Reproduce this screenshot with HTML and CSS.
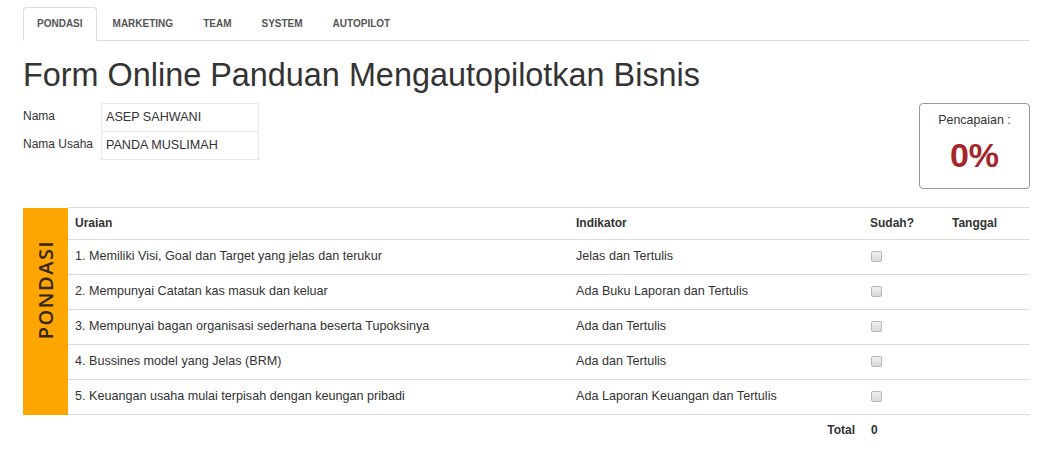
FILE: index.html
```html
<!DOCTYPE html>
<html lang="id">
<head>
<meta charset="utf-8">
<title>Form Online Panduan Mengautopilotkan Bisnis</title>
<link rel="stylesheet" href="styles.css">
</head>
<body>
<div class="page">
  <ul class="tabs">
    <li class="tab active"><a>PONDASI</a></li>
    <li class="tab"><a>MARKETING</a></li>
    <li class="tab"><a>TEAM</a></li>
    <li class="tab"><a>SYSTEM</a></li>
    <li class="tab"><a>AUTOPILOT</a></li>
  </ul>

  <h1 class="title">Form Online Panduan Mengautopilotkan Bisnis</h1>

  <div class="info-row">
    <table class="identity">
      <tr><td class="lbl">Nama</td><td class="val">ASEP SAHWANI</td></tr>
      <tr><td class="lbl">Nama Usaha</td><td class="val">PANDA MUSLIMAH</td></tr>
    </table>
    <div class="score">
      <div class="score-label">Pencapaian :</div>
      <div class="score-value">0%</div>
    </div>
  </div>

  <table class="checklist">
    <colgroup>
      <col class="c-side"><col class="c-uraian"><col class="c-indikator"><col class="c-sudah"><col class="c-tanggal">
    </colgroup>
    <tr class="head">
      <td class="side" rowspan="6"><span class="side-text">PONDASI</span></td>
      <th>Uraian</th><th>Indikator</th><th>Sudah?</th><th>Tanggal</th>
    </tr>
    <tr><td>1. Memiliki Visi, Goal dan Target yang jelas dan terukur</td><td>Jelas dan Tertulis</td><td><span class="check"></span></td><td></td></tr>
    <tr><td>2. Mempunyai Catatan kas masuk dan keluar</td><td>Ada Buku Laporan dan Tertulis</td><td><span class="check"></span></td><td></td></tr>
    <tr><td>3. Mempunyai bagan organisasi sederhana beserta Tupoksinya</td><td>Ada dan Tertulis</td><td><span class="check"></span></td><td></td></tr>
    <tr><td>4. Bussines model yang Jelas (BRM)</td><td>Ada dan Tertulis</td><td><span class="check"></span></td><td></td></tr>
    <tr><td>5. Keuangan usaha mulai terpisah dengan keungan pribadi</td><td>Ada Laporan Keuangan dan Tertulis</td><td><span class="check"></span></td><td></td></tr>
    <tr class="total"><td></td><td></td><td class="total-lbl">Total</td><td class="total-val">0</td><td></td></tr>
  </table>
</div>
</body>
</html>
```

FILE: styles.css
```css
html, body {
  margin: 0;
  padding: 0;
  background: #fff;
}
body {
  font-family: "Liberation Sans", Arial, sans-serif;
  font-size: 12px;
  color: #333;
}
.page {
  padding: 7px 10px 0 23px;
}

/* tabs */
.tabs {
  list-style: none;
  margin: 0;
  padding: 0;
  display: flex;
  border-bottom: 1px solid #ddd;
}
.tab {
  margin-right: 2px;
  margin-bottom: -1px;
}
.tab a {
  display: block;
  padding: 10px 13px;
  line-height: 12px;
  font-size: 10px;
  font-weight: bold;
  color: #555;
  border: 1px solid transparent;
  border-radius: 4px 4px 0 0;
}
.tab.active a {
  border-color: #ddd;
  border-bottom-color: #fff;
  background: #fff;
}

/* title */
.title {
  margin: 17px 0 10px;
  font-size: 32.4px;
  line-height: 35px;
  font-weight: normal;
  color: #333;
}

/* info row */
.info-row {
  display: flex;
  justify-content: space-between;
  align-items: flex-start;
}
.identity {
  border-collapse: collapse;
}
.identity td {
  height: 26px;
  padding: 0 0 2px 0;
  line-height: 17px;
}
.identity .lbl {
  width: 78px;
}
.identity .val {
  width: 152px;
  padding: 0 0 1px 4px;
  border: 1px solid #e8e8e8;
  font-size: 12.6px;
}
.score {
  width: 109px;
  height: 84px;
  border: 1px solid #999;
  border-radius: 4px;
  text-align: center;
}
.score-label {
  margin-top: 9px;
  line-height: 15px;
  font-size: 12.4px;
}
.score-value {
  margin-top: 9px;
  font-size: 34px;
  line-height: 36px;
  font-weight: bold;
  color: #a3262a;
}

/* checklist */
.checklist {
  margin-top: 18px;
  width: 100%;
  border-collapse: collapse;
  table-layout: fixed;
}
.c-side { width: 45px; }
.c-uraian { width: 501px; }
.c-indikator { width: 294px; }
.c-sudah { width: 82px; }
.c-tanggal { width: auto; }
.checklist th,
.checklist td {
  padding: 0 8px 2px 7px;
  text-align: left;
  vertical-align: middle;
  border-top: 1px solid #ddd;
  height: 32px;
  line-height: 17px;
  font-size: 12.6px;
}
.checklist th {
  font-weight: bold;
  font-size: 12px;
  height: 31px;
  padding-bottom: 0;
}
.checklist tr:nth-child(6) td {
  border-bottom: 1px solid #ddd;
}
.checklist .side {
  background: #ffa500;
  border: none;
  padding: 0 0 38px 0;
  text-align: center;
  vertical-align: middle;
}
.side-text {
  display: inline-block;
  writing-mode: vertical-rl;
  transform: rotate(180deg);
  font-family: "Open Sans", sans-serif;
  font-size: 20px;
  font-weight: 600;
  letter-spacing: 1.5px;
  color: #33270f;
}
.checklist .total td {
  border-top: 1px solid #ddd;
  height: 31px;
  font-size: 12px;
}
.checklist .total td:first-child {
  border-top: none;
}
.total-lbl {
  text-align: right !important;
  font-weight: bold;
}
.total-val {
  font-weight: bold;
  padding-left: 8px !important;
}
.check {
  display: inline-block;
  width: 9px;
  height: 9px;
  margin-left: 1px;
  border: 1px solid #b8b8b8;
  border-radius: 2px;
  background: linear-gradient(#f0f0f0, #d8d8d8);
  vertical-align: middle;
}
```
